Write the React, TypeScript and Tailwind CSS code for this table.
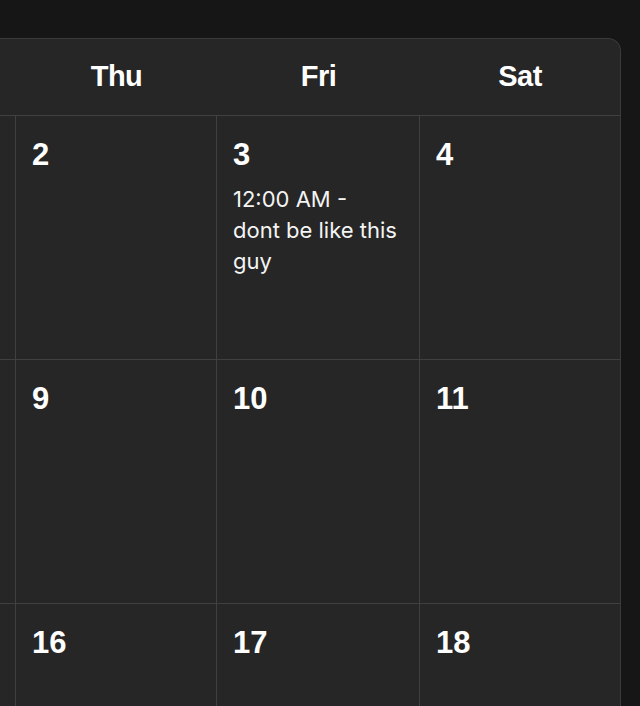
const days = ["Sun", "Mon", "Tue", "Wed", "Thu", "Fri", "Sat"];

type Ev = { time: string; title: string };
type Cell = { day?: number; events?: Ev[] };

const weeks: Cell[][] = [
  [
    {},
    {},
    {},
    { day: 1 },
    { day: 2 },
    { day: 3, events: [{ time: "12:00 AM -", title: "dont be like this guy" }] },
    { day: 4 },
  ],
  [5, 6, 7, 8, 9, 10, 11].map((d) => ({ day: d })),
  [12, 13, 14, 15, 16, 17, 18].map((d) => ({ day: d })),
];

const cols = "grid grid-cols-[202px_202px_202px_202px_201px_203px_200px]";

export default function App() {
  return (
    <div className="h-[706px] w-[640px] overflow-hidden bg-[#161616] pt-[38px]">
      {/* Calendar card, scrolled so only the end of the week shows */}
      <div className="ml-[-793px] w-[1414px] rounded-t-[13px] border border-b-0 border-[#3b3b3b] bg-[#262626]">
        {/* Weekday header */}
        <div className={`${cols} h-[77px] border-b border-[#404040]`}>
          {days.map((d) => (
            <div
              key={d}
              className="flex items-center justify-center font-['Liberation_Sans',Arial,sans-serif] text-[29px] font-bold tracking-[-0.5px] text-white"
            >
              {d}
            </div>
          ))}
        </div>

        {/* Weeks */}
        {weeks.map((week, wi) => (
          <div key={wi} className={`${cols} h-[244px] border-b border-[#404040]`}>
            {week.map((cell, ci) => (
              <div
                key={ci}
                className={ci < 6 ? "border-r border-[#404040] px-4 pt-5" : "px-4 pt-5"}
              >
                {cell.day && (
                  <p className="font-['Liberation_Sans',Arial,sans-serif] text-[31px] leading-[37px] font-bold text-white">
                    {cell.day}
                  </p>
                )}
                {cell.events?.map((ev) => (
                  <div
                    key={ev.title}
                    className="mt-[11px] font-['Inter',sans-serif] text-[22px] leading-[31px] text-[#f4f4f4]"
                  >
                    <p>{ev.time}</p>
                    <p>{ev.title}</p>
                  </div>
                ))}
              </div>
            ))}
          </div>
        ))}
      </div>
    </div>
  );
}
